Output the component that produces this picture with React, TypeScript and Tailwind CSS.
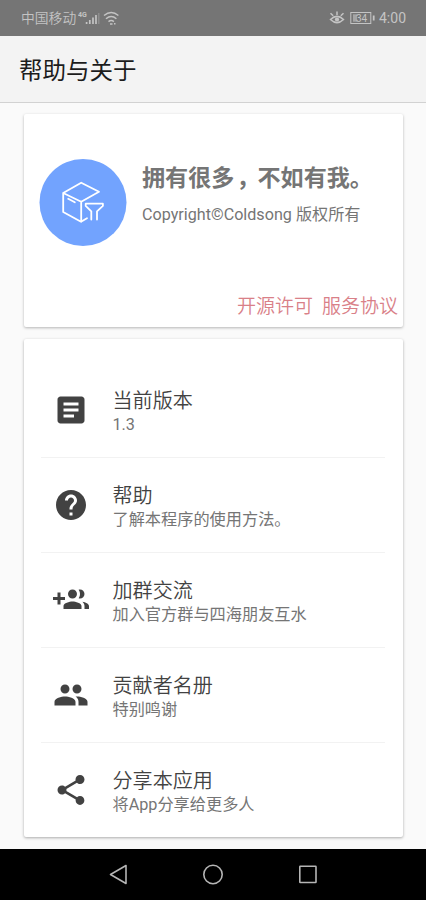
import type { ReactNode } from "react";
import { MdArticle, MdHelp, MdPeople, MdShare } from "react-icons/md";

function GroupAddIcon() {
  return (
    <svg width="36" height="36" viewBox="0 0 24 24" fill="currentColor">
      <path d="M8 10H5V7H3v3H0v2h3v3h2v-3h3v-2zm10 1c1.66 0 2.99-1.34 2.99-3S19.66 5 18 5c-.32 0-.63.05-.91.14.57.81.9 1.79.9 2.86s-.34 2.04-.9 2.86c.28.09.59.14.91.14zm-5 0c1.66 0 2.99-1.34 2.99-3S14.66 5 13 5c-1.66 0-3 1.34-3 3s1.34 3 3 3zm6.62 2.16c.83.73 1.38 1.66 1.38 2.84v2h3v-2c0-1.54-2.37-2.49-4.38-2.84zM13 13c-2 0-6 1-6 3v2h12v-2c0-2-4-3-6-3z" />
    </svg>
  );
}

function Logo() {
  return (
    <svg
      width="88"
      height="88"
      viewBox="0 0 88 88"
      fill="none"
      stroke="white"
      strokeWidth="1.8"
      strokeLinecap="round"
      strokeLinejoin="round"
      className="shrink-0"
    >
      <circle cx="44" cy="43.5" r="43.5" fill="#72a3fe" stroke="none" />
      <path d="M24.2 34 42.2 23.7 60 32.8 42.2 42.7 24.2 34v19L42 62.8l6-3.6M42.2 42.7v20.1" />
      <path d="M29.2 39.8l6.6 3.5" />
      <path d="M52.3 60.5v-8.2l-5.6-5.4v-2.2h17.2v2.2L58 52.3v8.2" />
    </svg>
  );
}

function StatusBar() {
  return (
    <div className="flex h-9 items-center justify-between bg-[#757575] pr-5 pl-[21px] text-[14px] text-[#c4c4c4]">
      <div className="flex items-center">
        <span className="text-[13.8px] font-[350]">中国移动</span>
        <svg width="46" height="18" viewBox="0 0 46 18" fill="none" stroke="currentColor" className="ml-0.5">
          <text x="0" y="8" fontSize="7" fontWeight="bold" fill="currentColor" stroke="none">4G</text>
          <path d="M8.6 15v-2M11.8 15v-4M15 15V8.5M18 15V6" strokeWidth="1.7" />
          <path d="M20.8 15V4" strokeWidth="1.2" opacity=".4" />
          <path d="M26 6.5q7.2-6 14.4 0M28 9.7q5.2-4.4 10.4 0M30.5 12.6q2.7-2.2 5.4 0" strokeWidth="1.5" />
          <path d="M32 15h2.5M36 14.8h1.5" strokeWidth="1.5" />
        </svg>
      </div>
      <div className="flex items-center">
        <svg width="16" height="14" viewBox="0 0 16 14" fill="none" stroke="currentColor" strokeWidth="1.5" className="mr-px">
          <path d="M1.5 8.5Q8 2.2 14.5 8.5 8 14.8 1.5 8.5zM8 4V.5M4.2 4.8 1.5 2.2M11.8 4.8l2.7-2.6" />
          <circle cx="8" cy="8.5" r="2.1" fill="currentColor" stroke="none" />
        </svg>
        <svg width="25" height="14" viewBox="0 0 25 14" fill="none" stroke="currentColor" className="ml-1">
          <rect x=".8" y="1.5" width="20" height="11" />
          <path d="M3 3.3h4v7.4H3z" fill="currentColor" stroke="none" opacity=".6" />
          <path d="M23.7 4.5v5" strokeWidth="1.8" />
          <text x="6" y="10.5" fontSize="10" fill="currentColor" stroke="none">34</text>
        </svg>
        <span className="ml-1">4:00</span>
      </div>
    </div>
  );
}

type Item = { icon: ReactNode; title: string; detail: string };

const items: Item[] = [
  { icon: <MdArticle size={36} />, title: "当前版本", detail: "1.3" },
  { icon: <MdHelp size={36} />, title: "帮助", detail: "了解本程序的使用方法。" },
  { icon: <GroupAddIcon />, title: "加群交流", detail: "加入官方群与四海朋友互水" },
  { icon: <MdPeople size={36} />, title: "贡献者名册", detail: "特别鸣谢" },
  { icon: <MdShare size={36} />, title: "分享本应用", detail: "将App分享给更多人" },
];

export default function App() {
  return (
    <div className="flex h-[900px] w-[426px] flex-col overflow-hidden bg-[#fafafa] font-[Roboto,'Noto_Sans_CJK_SC',sans-serif]">
      <StatusBar />
      <header className="flex h-[67px] items-center border-b border-[#d2d2d2] bg-[#f3f3f3] pt-1.5 pl-[19px]">
        <h1 className="text-[23.5px] font-normal text-[#1c1c1c]">帮助与关于</h1>
      </header>

      <main className="flex flex-1 flex-col gap-3 pt-[11px] pr-[23px] pl-6">
        <section className="flex h-[213px] flex-col justify-between rounded-xs bg-white shadow-[0_1px_3px_rgba(0,0,0,0.28)]">
          <div className="flex pt-[45px] pl-[15px]">
            <Logo />
            <div className="pt-1 pl-[15px] whitespace-nowrap text-[#757575]">
              <h2 className="text-[23.1px] leading-[32px] font-bold">
                拥有很多<span className="inline-block translate-x-0.5">，</span>不如有我。
              </h2>
              <p className="mt-2 text-[16.15px] leading-[24px]">Copyright©Coldsong 版权所有</p>
            </div>
          </div>
          <div className="flex justify-end gap-[9px] pr-[5px] pb-[7px] text-[19px] leading-[27px] font-[350] text-[#d98088]">
            <a>开源许可</a>
            <a>服务协议</a>
          </div>
        </section>

        <section className="h-[498px] rounded-xs bg-white pr-[18px] pl-[17px] pt-6 shadow-[0_1px_3px_rgba(0,0,0,0.32)]">
          {items.map((item) => (
            <div
              key={item.title}
              className="flex h-[95px] items-center border-b border-[#f2f2f2] pl-3 last:border-transparent"
            >
              <div className="w-9 text-[#424242]">{item.icon}</div>
              <div className="pt-[5px] pl-[23.5px]">
                <div className="text-[20.1px] leading-[25px] font-[350] text-[#424242]">{item.title}</div>
                <div className="text-[16.2px] leading-[22px] text-[#757575]">{item.detail}</div>
              </div>
            </div>
          ))}
        </section>
      </main>

      <nav className="flex h-[51px] items-center justify-center gap-[71px] bg-black text-[#b5b5b5]">
        <svg width="24" height="24" viewBox="0 0 24 24" fill="none" stroke="currentColor" strokeWidth="1.6" strokeLinejoin="round">
          <path d="M20 2.5v18L4.5 11.5z" />
        </svg>
        <svg width="24" height="24" viewBox="0 0 24 24" fill="none" stroke="currentColor" strokeWidth="1.6">
          <circle cx="12" cy="11.5" r="9.2" />
        </svg>
        <svg width="24" height="24" viewBox="0 0 24 24" fill="none" stroke="currentColor" strokeWidth="1.6">
          <rect x="3.8" y="3.3" width="16.2" height="16.2" rx="0.5" />
        </svg>
      </nav>
    </div>
  );
}
